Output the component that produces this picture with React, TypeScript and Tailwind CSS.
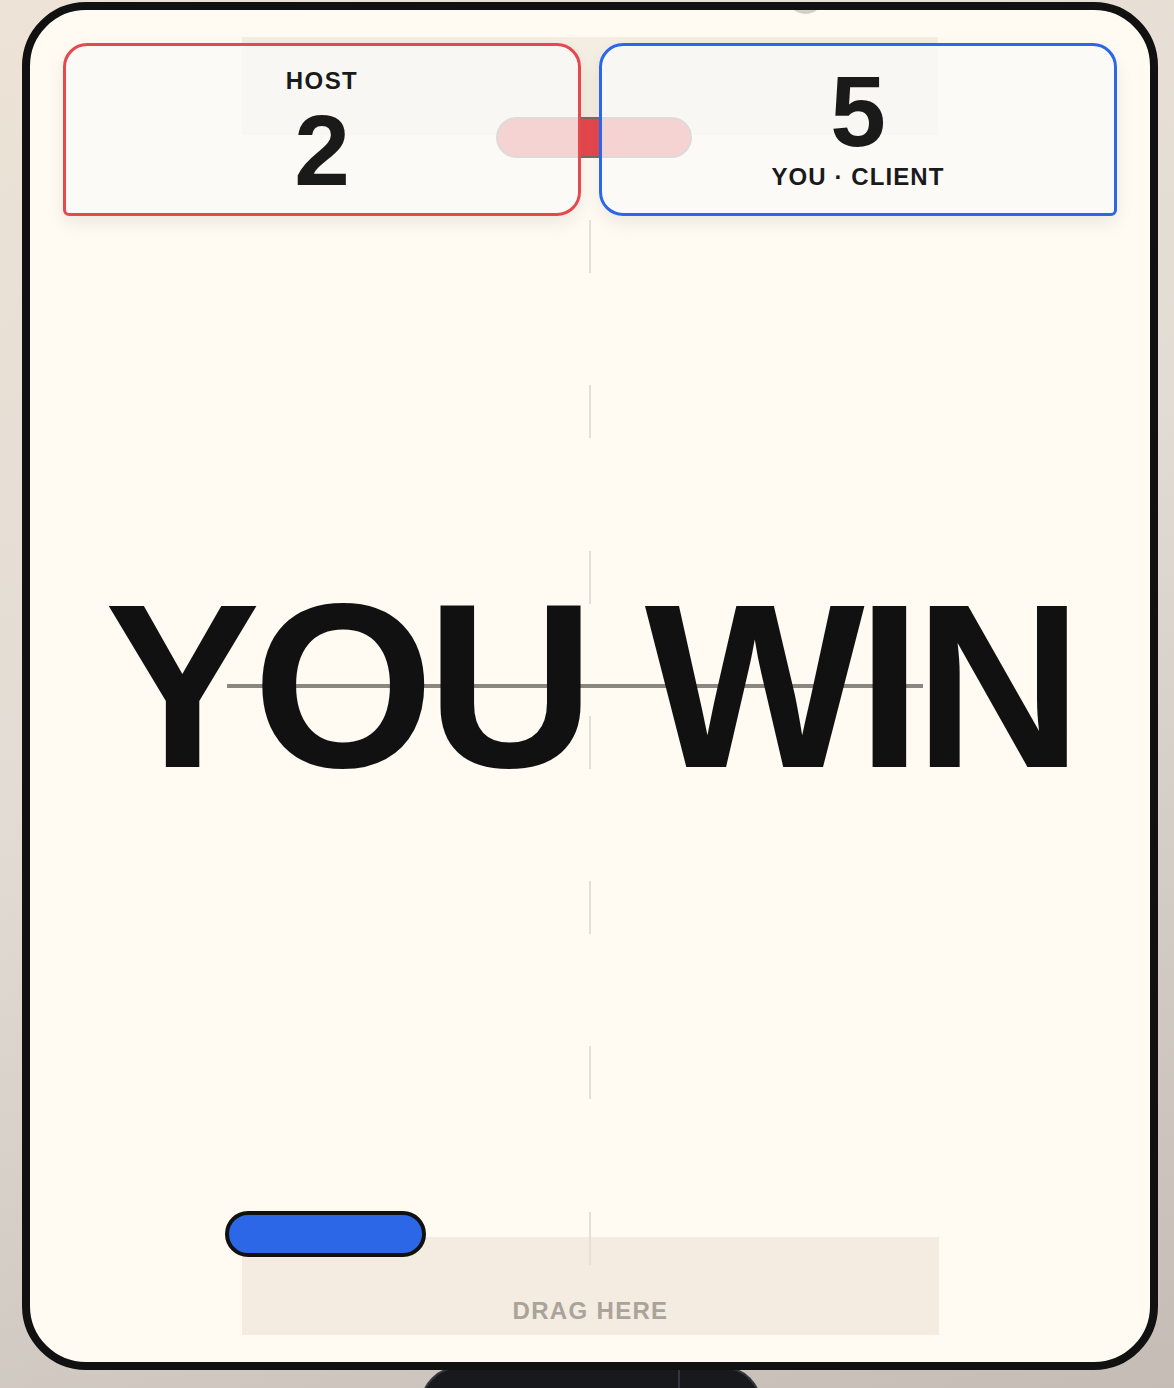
import React from "react";

const dashes = [0, 1, 2, 3, 4, 5, 6];

export default function App() {
  return (
    <div
      className="relative h-[1388px] w-full overflow-hidden bg-[linear-gradient(160deg,#ede3d6_0%,#e2dcd4_45%,#c4bcb5_100%)] flex flex-col items-start"
      style={{ fontFamily: '"Liberation Sans", Arial, sans-serif' }}
    >
      {/* Device frame */}
      <div className="relative z-10 ml-[22px] mt-[2px] h-[1368px] w-[1136px] shrink-0 overflow-hidden rounded-[64px] border-[8px] border-[#111111] bg-[#fffaf2]">
        {/* notch dot */}
        <div className="absolute left-[757px] top-[-15px] h-[19px] w-[37px] rounded-b-full bg-[#d3cfc8]" />

        {/* top goal band */}
        <div className="absolute left-[212px] top-[27px] h-[98px] w-[696px] bg-[#f4ede1]" />

        {/* bottom goal band */}
        <div className="absolute left-[212px] top-[1227px] flex h-[98px] w-[697px] items-end justify-center bg-[#f4ece0] pb-[12px]">
          <span className="text-[24px] font-bold leading-none tracking-[0.055em] text-[#a9a39b]">
            DRAG HERE
          </span>
        </div>

        {/* center dashed line */}
        <div className="absolute left-[559px] top-[210px] flex flex-col gap-[112.3px]">
          {dashes.map((d) => (
            <div key={d} className="h-[53px] w-[2px] bg-[#e4dfd7]" />
          ))}
        </div>

        {/* ball trail line */}
        <div className="absolute left-[197px] top-[674px] h-[4px] w-[696px] bg-[#8a8780]" />

        {/* opponent paddle */}
        <div className="absolute left-[466px] top-[107px] h-[41px] w-[196px] rounded-full border-2 border-[#7d6b6b] bg-[#e5484d]" />

        {/* player paddle */}
        <div className="absolute left-[195px] top-[1201px] h-[46px] w-[201px] rounded-full border-[4px] border-[#111111] bg-[#2b67e6]" />

        {/* YOU WIN */}
        <div className="absolute inset-x-0 top-[560px] flex justify-center">
          <span className="text-[233px] font-bold leading-none tracking-[-0.032em] text-[#111111] whitespace-nowrap">
            YOU WIN
          </span>
        </div>

        {/* Scoreboard */}
        <div className="absolute left-[33px] right-[33px] top-[33px] grid grid-cols-2 gap-[18px]">
          <div className="flex h-[173px] flex-col items-center rounded-[24px] rounded-bl-[6px] border-[3.5px] border-[#e5484d] bg-[rgba(250,250,248,0.78)] pt-[23px] shadow-[0_8px_18px_rgba(0,0,0,0.07)]">
            <span className="text-[24px] font-bold leading-none tracking-[0.06em] text-[#1a1a1a]">
              HOST
            </span>
            <span className="mt-[7px] text-[100px] font-bold leading-none text-[#1a1a1a]">
              2
            </span>
          </div>
          <div className="flex h-[173px] flex-col items-center rounded-[24px] rounded-br-[6px] border-[3.5px] border-[#2b67e6] bg-[rgba(250,250,248,0.78)] pt-[15px] shadow-[0_8px_18px_rgba(0,0,0,0.07)]">
            <span className="text-[100px] font-bold leading-none text-[#1a1a1a]">
              5
            </span>
            <span className="mt-[4px] text-[24px] font-bold leading-none tracking-[0.045em] text-[#1a1a1a]">
              YOU · CLIENT
            </span>
          </div>
        </div>
      </div>

      {/* bottom dock tab */}
      <div className="relative -mt-[4px] ml-[420px] h-[40px] w-[342px] shrink-0 rounded-t-[56px] border-2 border-b-0 border-[#34373f] bg-[#18191d]">
        <div className="absolute left-[256px] top-0 h-full w-[2px] bg-[#34373f]" />
      </div>
    </div>
  );
}
